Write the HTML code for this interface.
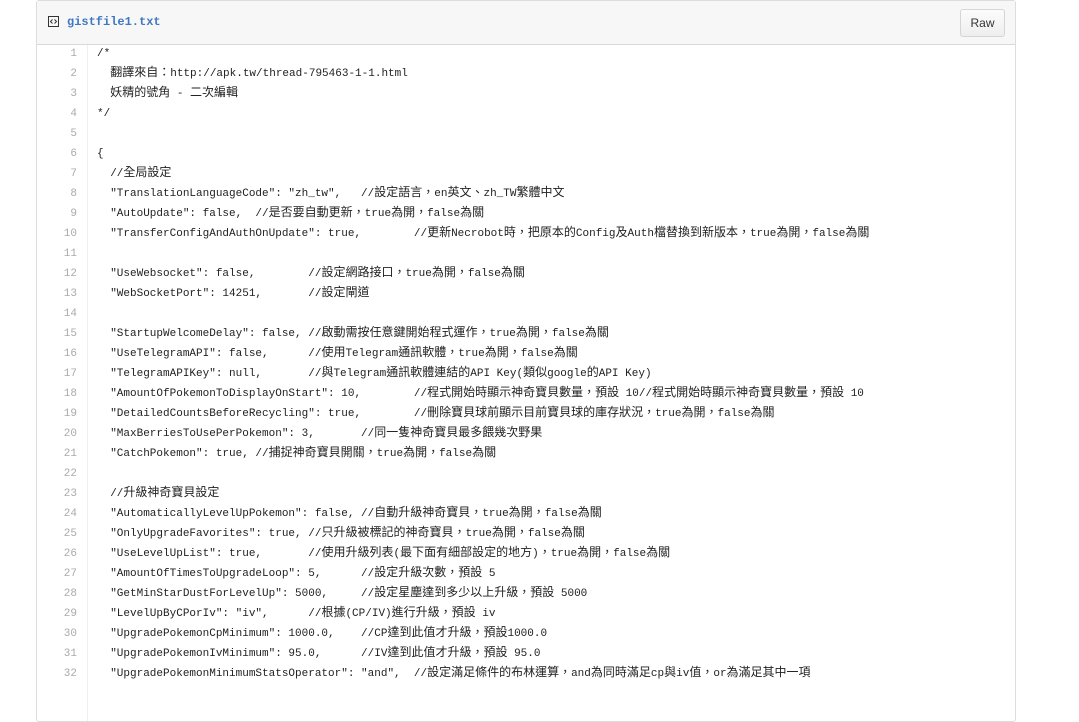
<!DOCTYPE html>
<html><head><meta charset="utf-8">
<style>
body{margin:0;background:#fff;width:1079px;height:693px;overflow:hidden;}
.box{position:absolute;left:36px;top:0;width:978px;height:720px;border:1px solid #ddd;border-radius:3px;}
.hdr{height:43px;background:#f7f7f7;border-bottom:1px solid #d8d8d8;position:relative;}
.icon{position:absolute;left:11px;top:15px;}
.fname{position:absolute;left:30px;top:14px;font:bold 12px "Liberation Mono",monospace;color:#4078c0;}
.raw{position:absolute;left:923px;top:8px;width:43px;height:26px;border:1px solid #d5d5d5;border-radius:3px;background:linear-gradient(#fcfcfc,#eee);font:12px/26px "Liberation Sans",sans-serif;color:#333;text-align:center;}
.gut{position:absolute;left:0;top:44px;width:50px;bottom:0;border-right:1px solid #eee;}
.ln{position:absolute;left:0;width:41px;text-align:right;color:#aaa;font:11px/20px "Liberation Mono",monospace;}
.tx{position:absolute;left:61px;height:20px;white-space:pre;color:#222;font:11px/20px "Liberation Mono",monospace;}
.tx .c{display:inline-block;height:20px;line-height:20px;vertical-align:top;position:relative;top:-2px;font-size:12px;font-family:"Noto Sans CJK TC",sans-serif;}
</style></head><body>
<div class="box">
<div class="hdr"><svg class="icon" width="11" height="11" viewBox="0 0 11 11"><rect x="0.5" y="0.5" width="10" height="10" fill="none" stroke="#333"/><path d="M4.5 3.5L2.5 5.5L4.5 7.5M6.5 3.5L8.5 5.5L6.5 7.5" fill="none" stroke="#333"/></svg><div class="fname">gistfile1.txt</div><div class="raw">Raw</div></div>
<div class="gut"></div>
</div>
<div id="L" style="position:absolute;left:36px;top:44px;">
<div class="ln" style="top:0">1</div><div class="tx" style="top:0">/*</div>
<div class="ln" style="top:20px">2</div><div class="tx" style="top:20px">  翻譯來自：http://apk.tw/thread-795463-1-1.html</div>
<div class="ln" style="top:40px">3</div><div class="tx" style="top:40px">  妖精的號角 - 二次編輯</div>
<div class="ln" style="top:60px">4</div><div class="tx" style="top:60px">*/</div>
<div class="ln" style="top:80px">5</div>
<div class="ln" style="top:100px">6</div><div class="tx" style="top:100px">{</div>
<div class="ln" style="top:120px">7</div><div class="tx" style="top:120px">  //全局設定</div>
<div class="ln" style="top:140px">8</div><div class="tx" style="top:140px">  "TranslationLanguageCode": "zh_tw",   //設定語言，en英文、zh_TW繁體中文</div>
<div class="ln" style="top:160px">9</div><div class="tx" style="top:160px">  "AutoUpdate": false,  //是否要自動更新，true為開，false為關</div>
<div class="ln" style="top:180px">10</div><div class="tx" style="top:180px">  "TransferConfigAndAuthOnUpdate": true,        //更新Necrobot時，把原本的Config及Auth檔替換到新版本，true為開，false為關</div>
<div class="ln" style="top:200px">11</div>
<div class="ln" style="top:220px">12</div><div class="tx" style="top:220px">  "UseWebsocket": false,        //設定網路接口，true為開，false為關</div>
<div class="ln" style="top:240px">13</div><div class="tx" style="top:240px">  "WebSocketPort": 14251,       //設定閘道</div>
<div class="ln" style="top:260px">14</div>
<div class="ln" style="top:280px">15</div><div class="tx" style="top:280px">  "StartupWelcomeDelay": false, //啟動需按任意鍵開始程式運作，true為開，false為關</div>
<div class="ln" style="top:300px">16</div><div class="tx" style="top:300px">  "UseTelegramAPI": false,      //使用Telegram通訊軟體，true為開，false為關</div>
<div class="ln" style="top:320px">17</div><div class="tx" style="top:320px">  "TelegramAPIKey": null,       //與Telegram通訊軟體連結的API Key(類似google的API Key)</div>
<div class="ln" style="top:340px">18</div><div class="tx" style="top:340px">  "AmountOfPokemonToDisplayOnStart": 10,        //程式開始時顯示神奇寶貝數量，預設 10//程式開始時顯示神奇寶貝數量，預設 10</div>
<div class="ln" style="top:360px">19</div><div class="tx" style="top:360px">  "DetailedCountsBeforeRecycling": true,        //刪除寶貝球前顯示目前寶貝球的庫存狀況，true為開，false為關</div>
<div class="ln" style="top:380px">20</div><div class="tx" style="top:380px">  "MaxBerriesToUsePerPokemon": 3,       //同一隻神奇寶貝最多餵幾次野果</div>
<div class="ln" style="top:400px">21</div><div class="tx" style="top:400px">  "CatchPokemon": true, //捕捉神奇寶貝開關，true為開，false為關</div>
<div class="ln" style="top:420px">22</div>
<div class="ln" style="top:440px">23</div><div class="tx" style="top:440px">  //升級神奇寶貝設定</div>
<div class="ln" style="top:460px">24</div><div class="tx" style="top:460px">  "AutomaticallyLevelUpPokemon": false, //自動升級神奇寶貝，true為開，false為關</div>
<div class="ln" style="top:480px">25</div><div class="tx" style="top:480px">  "OnlyUpgradeFavorites": true, //只升級被標記的神奇寶貝，true為開，false為關</div>
<div class="ln" style="top:500px">26</div><div class="tx" style="top:500px">  "UseLevelUpList": true,       //使用升級列表(最下面有細部設定的地方)，true為開，false為關</div>
<div class="ln" style="top:520px">27</div><div class="tx" style="top:520px">  "AmountOfTimesToUpgradeLoop": 5,      //設定升級次數，預設 5</div>
<div class="ln" style="top:540px">28</div><div class="tx" style="top:540px">  "GetMinStarDustForLevelUp": 5000,     //設定星塵達到多少以上升級，預設 5000</div>
<div class="ln" style="top:560px">29</div><div class="tx" style="top:560px">  "LevelUpByCPorIv": "iv",      //根據(CP/IV)進行升級，預設 iv</div>
<div class="ln" style="top:580px">30</div><div class="tx" style="top:580px">  "UpgradePokemonCpMinimum": 1000.0,    //CP達到此值才升級，預設1000.0</div>
<div class="ln" style="top:600px">31</div><div class="tx" style="top:600px">  "UpgradePokemonIvMinimum": 95.0,      //IV達到此值才升級，預設 95.0</div>
<div class="ln" style="top:620px">32</div><div class="tx" style="top:620px">  "UpgradePokemonMinimumStatsOperator": "and",  //設定滿足條件的布林運算，and為同時滿足cp與iv值，or為滿足其中一項</div>
</div>
<script>
document.querySelectorAll('.tx').forEach(function(e){
  e.innerHTML=e.textContent.replace(/&/g,'&amp;').replace(/</g,'&lt;').replace(/([\u3000-\u9fff\uff00-\uffef]+)/g,'<span class="c">$1</span>');
});
</script>
</body></html>
